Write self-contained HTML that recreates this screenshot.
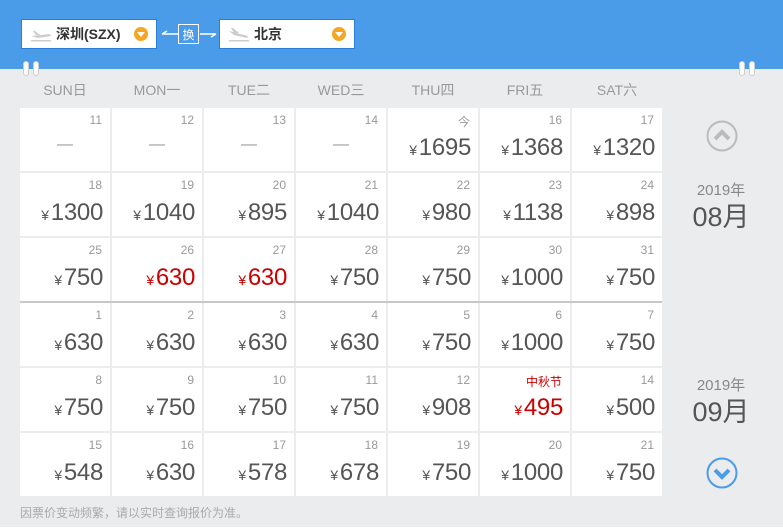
<!DOCTYPE html>
<html><head><meta charset="utf-8"><style>
*{margin:0;padding:0;box-sizing:border-box}
body{width:783px;height:529px;overflow:hidden;background:#fff;font-family:"Liberation Sans","Noto Sans CJK SC",sans-serif;position:relative}
.bg{position:absolute;left:0;top:0;width:783px;height:527px;background:#ebecee}
.hd{position:absolute;left:0;top:0;width:783px;height:69px;background:#4a9be8}
.sel{position:absolute;top:19px;height:30px;background:#fff;border:1px solid #2a7fd8;font-weight:bold;font-size:14px;color:#333;line-height:28px}
.sel .dd{position:absolute;right:8px;top:7px;width:14px;height:14px;border-radius:50%;background:#f5a623}
.sel .dd:after{content:"";position:absolute;left:3px;top:5px;border-left:4px solid transparent;border-right:4px solid transparent;border-top:5px solid #fff}
.pin{position:absolute;top:61px;width:6px;height:15px;border-radius:3px;background:#fff;border:1px solid #ccc}
.wk{position:absolute;top:80px;width:90px;text-align:center;font-size:14px;color:#999}
.c{position:absolute;width:90px;height:63px;background:#fff}
.c .n{position:absolute;right:8px;top:5px;font-size:12px;color:#999}
.c .p{position:absolute;right:7px;top:26px;font-size:24px;color:#555;white-space:nowrap;letter-spacing:-0.3px}
.c .p i{font-style:normal;font-size:14px;margin-right:2px}
.c .d{position:absolute;left:0;width:90px;top:28px;text-align:center;color:#999;font-size:16px}
.r{color:#c00!important}
.yr{position:absolute;left:679px;width:84px;text-align:center;color:#888;font-size:15px}
.mo{position:absolute;left:679px;width:84px;text-align:center;color:#555;font-size:27px}
</style></head><body>
<div class="bg"></div>
<div class="hd"></div>
<div class="sel" style="left:21px;width:136px"><svg style="position:absolute;left:8px;top:8px" width="22" height="14"><path d="M1 8 L20 6 L21 8 L8 10Z M6 7 L3 3 L5 3 L10 7Z" fill="#ccc"/><rect x="1" y="12" width="20" height="1.5" fill="#ccc"/></svg><span style="position:absolute;left:34px">深圳(SZX)</span><span class="dd"></span></div>
<svg style="position:absolute;left:160px;top:24px" width="58" height="20"><path d="M2 10 L18 10 M2 10 L7 7 M40 10 L56 10 M56 10 L51 13" stroke="#fff" stroke-width="1.5" fill="none"/><rect x="18.5" y="0.5" width="20" height="19" fill="none" stroke="#fff"/><text x="28.5" y="15" font-size="12" fill="#fff" text-anchor="middle" font-family="Noto Sans CJK SC">换</text></svg>
<div class="sel" style="left:219px;width:136px"><svg style="position:absolute;left:8px;top:7px" width="22" height="16"><path d="M1 4 L20 9 L19 11 L6 8Z M6 6 L3 1 L5 1 L11 6Z" fill="#ccc"/><rect x="1" y="13" width="20" height="1.5" fill="#ccc"/></svg><span style="position:absolute;left:34px">北京</span><span class="dd"></span></div>
<div class="pin" style="left:23px"></div><div class="pin" style="left:33px"></div>
<div class="pin" style="left:739px"></div><div class="pin" style="left:749px"></div>
<div class="wk" style="left:20px">SUN日</div><div class="wk" style="left:112px">MON一</div><div class="wk" style="left:204px">TUE二</div><div class="wk" style="left:296px">WED三</div><div class="wk" style="left:388px">THU四</div><div class="wk" style="left:480px">FRI五</div><div class="wk" style="left:572px">SAT六</div>
<div style="position:absolute;left:20px;top:301px;width:642px;height:2px;background:#c8c8c8"></div>

<div class="c" style="left:20px;top:108px"><span class="n">11</span><span class="d">—</span></div>
<div class="c" style="left:112px;top:108px"><span class="n">12</span><span class="d">—</span></div>
<div class="c" style="left:204px;top:108px"><span class="n">13</span><span class="d">—</span></div>
<div class="c" style="left:296px;top:108px"><span class="n">14</span><span class="d">—</span></div>
<div class="c" style="left:388px;top:108px"><span class="n">今</span><span class="p"><i>¥</i>1695</span></div>
<div class="c" style="left:480px;top:108px"><span class="n">16</span><span class="p"><i>¥</i>1368</span></div>
<div class="c" style="left:572px;top:108px"><span class="n">17</span><span class="p"><i>¥</i>1320</span></div>

<div class="c" style="left:20px;top:173px"><span class="n">18</span><span class="p"><i>¥</i>1300</span></div>
<div class="c" style="left:112px;top:173px"><span class="n">19</span><span class="p"><i>¥</i>1040</span></div>
<div class="c" style="left:204px;top:173px"><span class="n">20</span><span class="p"><i>¥</i>895</span></div>
<div class="c" style="left:296px;top:173px"><span class="n">21</span><span class="p"><i>¥</i>1040</span></div>
<div class="c" style="left:388px;top:173px"><span class="n">22</span><span class="p"><i>¥</i>980</span></div>
<div class="c" style="left:480px;top:173px"><span class="n">23</span><span class="p"><i>¥</i>1138</span></div>
<div class="c" style="left:572px;top:173px"><span class="n">24</span><span class="p"><i>¥</i>898</span></div>

<div class="c" style="left:20px;top:238px"><span class="n">25</span><span class="p"><i>¥</i>750</span></div>
<div class="c" style="left:112px;top:238px"><span class="n">26</span><span class="p r"><i>¥</i>630</span></div>
<div class="c" style="left:204px;top:238px"><span class="n">27</span><span class="p r"><i>¥</i>630</span></div>
<div class="c" style="left:296px;top:238px"><span class="n">28</span><span class="p"><i>¥</i>750</span></div>
<div class="c" style="left:388px;top:238px"><span class="n">29</span><span class="p"><i>¥</i>750</span></div>
<div class="c" style="left:480px;top:238px"><span class="n">30</span><span class="p"><i>¥</i>1000</span></div>
<div class="c" style="left:572px;top:238px"><span class="n">31</span><span class="p"><i>¥</i>750</span></div>

<div class="c" style="left:20px;top:303px"><span class="n">1</span><span class="p"><i>¥</i>630</span></div>
<div class="c" style="left:112px;top:303px"><span class="n">2</span><span class="p"><i>¥</i>630</span></div>
<div class="c" style="left:204px;top:303px"><span class="n">3</span><span class="p"><i>¥</i>630</span></div>
<div class="c" style="left:296px;top:303px"><span class="n">4</span><span class="p"><i>¥</i>630</span></div>
<div class="c" style="left:388px;top:303px"><span class="n">5</span><span class="p"><i>¥</i>750</span></div>
<div class="c" style="left:480px;top:303px"><span class="n">6</span><span class="p"><i>¥</i>1000</span></div>
<div class="c" style="left:572px;top:303px"><span class="n">7</span><span class="p"><i>¥</i>750</span></div>

<div class="c" style="left:20px;top:368px"><span class="n">8</span><span class="p"><i>¥</i>750</span></div>
<div class="c" style="left:112px;top:368px"><span class="n">9</span><span class="p"><i>¥</i>750</span></div>
<div class="c" style="left:204px;top:368px"><span class="n">10</span><span class="p"><i>¥</i>750</span></div>
<div class="c" style="left:296px;top:368px"><span class="n">11</span><span class="p"><i>¥</i>750</span></div>
<div class="c" style="left:388px;top:368px"><span class="n">12</span><span class="p"><i>¥</i>908</span></div>
<div class="c" style="left:480px;top:368px"><span class="n r">中秋节</span><span class="p r"><i>¥</i>495</span></div>
<div class="c" style="left:572px;top:368px"><span class="n">14</span><span class="p"><i>¥</i>500</span></div>

<div class="c" style="left:20px;top:433px"><span class="n">15</span><span class="p"><i>¥</i>548</span></div>
<div class="c" style="left:112px;top:433px"><span class="n">16</span><span class="p"><i>¥</i>630</span></div>
<div class="c" style="left:204px;top:433px"><span class="n">17</span><span class="p"><i>¥</i>578</span></div>
<div class="c" style="left:296px;top:433px"><span class="n">18</span><span class="p"><i>¥</i>678</span></div>
<div class="c" style="left:388px;top:433px"><span class="n">19</span><span class="p"><i>¥</i>750</span></div>
<div class="c" style="left:480px;top:433px"><span class="n">20</span><span class="p"><i>¥</i>1000</span></div>
<div class="c" style="left:572px;top:433px"><span class="n">21</span><span class="p"><i>¥</i>750</span></div>

<svg style="position:absolute;left:706px;top:120px" width="32" height="32"><circle cx="16" cy="16" r="14.5" fill="none" stroke="#bbb" stroke-width="2"/><path d="M9 19 L16 12 L23 19" fill="none" stroke="#bbb" stroke-width="4"/></svg>
<div class="yr" style="top:179px">2019年</div><div class="mo" style="top:195px">08月</div>
<div class="yr" style="top:374px">2019年</div><div class="mo" style="top:390px">09月</div>
<svg style="position:absolute;left:706px;top:457px" width="32" height="32"><circle cx="16" cy="16" r="14.5" fill="none" stroke="#4a9be8" stroke-width="2"/><path d="M9 13 L16 20 L23 13" fill="none" stroke="#4a9be8" stroke-width="4"/></svg>
<div style="position:absolute;left:20px;top:504px;font-size:12px;color:#aaa">因票价变动频繁，请以实时查询报价为准。</div>
</body></html>
